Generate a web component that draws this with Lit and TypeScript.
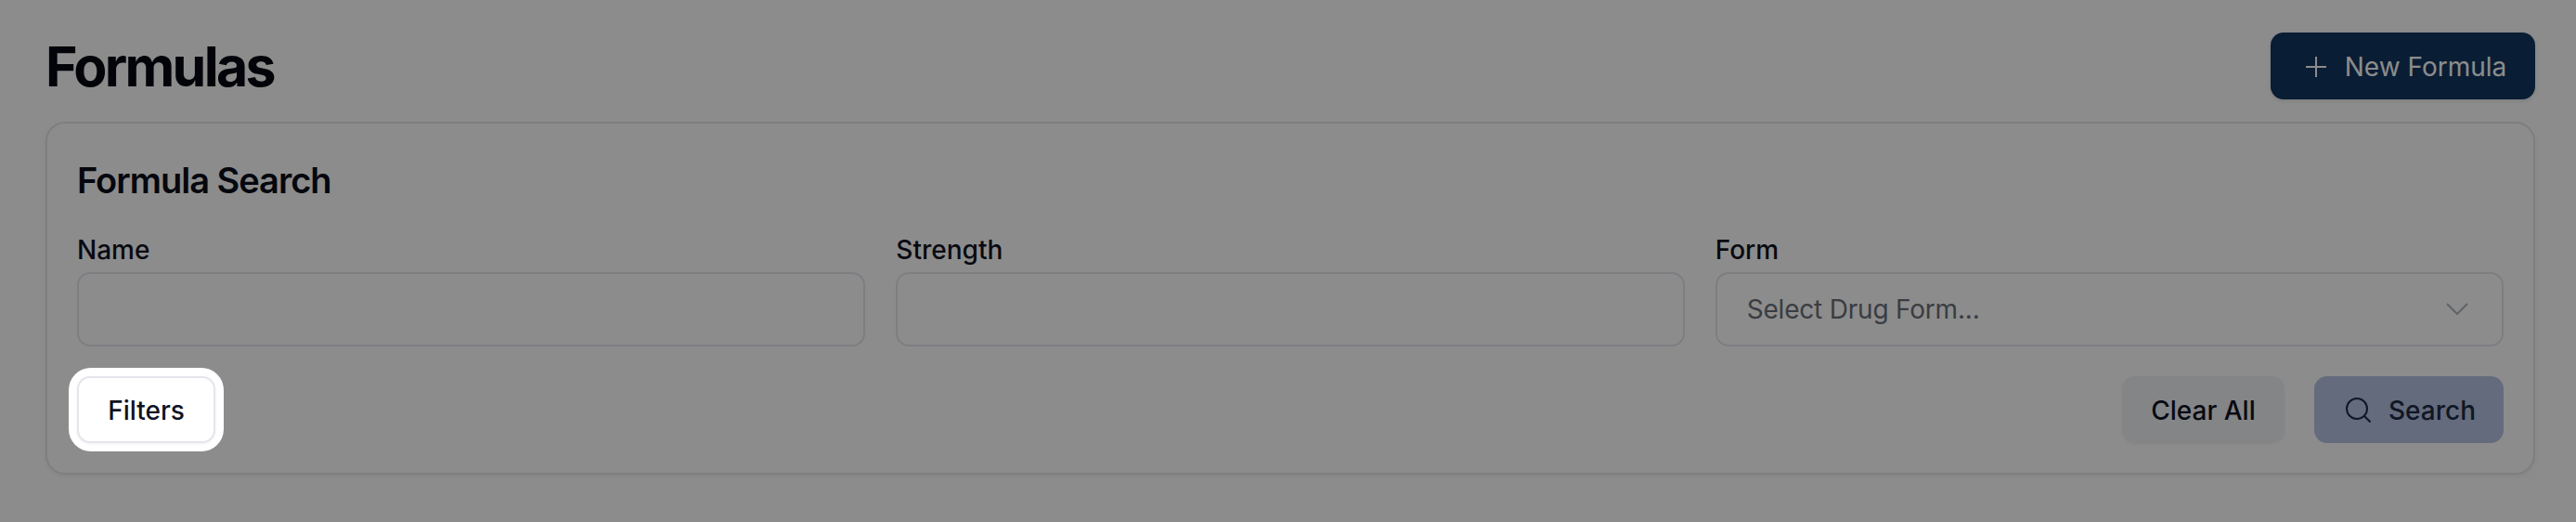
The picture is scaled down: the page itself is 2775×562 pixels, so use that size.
import { LitElement, html, css } from "lit";
import { customElement } from "lit/decorators.js";

@customElement("app-root")
export class AppRoot extends LitElement {
  static styles = css`
    :host { display: block; width: 2775px; height: 562px; overflow: hidden; background: #fff; font-family: Inter, "Noto Sans", sans-serif; color: #0f1322; position: relative; }
    .page { padding: 35px 44px 0 49px; display: flex; flex-direction: column; gap: 24px; }
    .head { display: flex; justify-content: space-between; align-items: center; }
    h1 { margin: 0; font-size: 59px; line-height: 72px; font-weight: 700; letter-spacing: -2.7px; color: #060912; padding-top: 1px; box-sizing: border-box; height: 72px; }
    button { font: inherit; border: 0; display: inline-flex; align-items: center; justify-content: center; height: 72px; border-radius: 14px; font-size: 28px; font-weight: 450; box-sizing: border-box; padding: 0; padding-top: 1px; }
    .new { width: 285px; gap: 20px; background: #12355f; color: #fff; box-shadow: 0 2px 4px rgba(0,0,0,.1); padding-left: 7px; font-weight: 400; }
    .card { border: 2px solid #e4e6ec; border-radius: 21px; padding: 36px 32px 32px; box-shadow: 0 2px 4px rgba(0,0,0,.06); display: flex; flex-direction: column; }
    h2 { margin: 0; font-size: 38px; line-height: 50px; font-weight: 600; letter-spacing: -1px; color: #0a0d1a; }
    .fields { display: grid; grid-template-columns: repeat(3, 1fr); gap: 33px; margin-top: 33px; }
    label { display: block; font-size: 28px; line-height: 34px; font-weight: 450; margin-bottom: 7px; color: #0f1322; }
    .input { height: 80px; box-sizing: border-box; border: 2px solid #e4e6ec; border-radius: 14px; display: flex; align-items: center; justify-content: space-between; padding: 0 36px 0 32px; font-size: 28px; color: #6b7078; letter-spacing: -.2px; }
    .chev { color: #b0b4bc; }
    .actions { display: flex; justify-content: space-between; align-items: center; margin-top: 32px; }
    .right { display: flex; gap: 32px; }
    .spot { position: relative; z-index: 10; margin: -9px; padding: 9px; background: #fff; border-radius: 24px; box-shadow: 0 0 0 3000px rgba(0,0,0,.45); display: flex; }
    .filters { width: 149px; background: #fff; color: #0f1322; border: 2px solid #e4e6ec; box-shadow: 0 1px 3px rgba(0,0,0,.06); }
    .clear { width: 175px; background: #f1f3f6; color: #0f1322; box-shadow: 0 1px 3px rgba(0,0,0,.06); }
    .search { width: 204px; gap: 19px; background: #b4c3e2; color: #1c2a45; padding-left: 4px; }
    svg { display: block; flex: none; fill: none; stroke: currentColor; }
  `;

  render() {
    return html`
      <div class="page">
        <div class="head">
          <h1>Formulas</h1>
          <button class="new">
            <svg width="22" height="22" viewBox="0 0 22 22" stroke-width="2"><path d="M11 0v22M0 11h22"/></svg>
            New Formula
          </button>
        </div>
        <div class="card">
          <h2>Formula Search</h2>
          <div class="fields">
            <div><label>Name</label><div class="input"></div></div>
            <div><label>Strength</label><div class="input"></div></div>
            <div><label>Form</label>
              <div class="input">Select Drug Form...
                <svg class="chev" width="24" height="14" viewBox="0 0 24 14" stroke-width="2"><path d="M1 1l11 11L23 1"/></svg>
              </div>
            </div>
          </div>
          <div class="actions">
            <div class="spot"><button class="filters">Filters</button></div>
            <div class="right">
              <button class="clear">Clear All</button>
              <button class="search">
                <svg width="27" height="27" viewBox="0 0 27 27" stroke-width="2"><circle cx="12" cy="12" r="11"/><path d="M20 20l6.5 6.5"/></svg>
                Search
              </button>
            </div>
          </div>
        </div>
      </div>
    `;
  }
}
